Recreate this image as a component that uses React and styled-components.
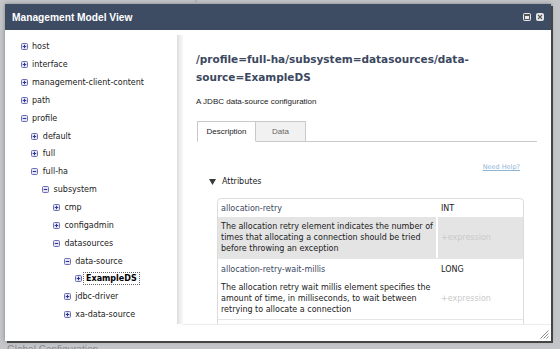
import React from 'react';
import styled, { createGlobalStyle } from 'styled-components';

const GlobalStyle = createGlobalStyle`
  html, body {
    margin: 0;
    padding: 0;
    overflow: hidden;
  }
`;

// background page behind the modal
const Page = styled.div`
  position: relative;
  width: 560px;
  height: 349px;
  overflow: hidden;
  background: #c3c5c9;
  display: flex;
  flex-direction: column;
  justify-content: space-between;
  font-family: 'DejaVu Sans', sans-serif;
`;

const BgHeading = styled.div`
  margin-top: -10px;
  padding-left: 160px;
  font: 11px 'Liberation Sans', sans-serif;
  color: #a3a5aa;
`;

const BgFooter = styled.div`
  margin-bottom: -6px;
  padding-left: 7px;
  font: 10px 'Liberation Sans', sans-serif;
  color: #8a8c90;
`;

// the modal window
const Dialog = styled.div`
  position: absolute;
  left: 5px;
  top: 4px;
  width: 546px;
  height: 337px;
  background: #fff;
  display: flex;
  flex-direction: column;
  box-shadow: 2px 2px 0 #444, 0 0 4px rgba(0, 0, 0, 0.35);
`;

const TitleBar = styled.div`
  height: 26px;
  flex: none;
  background: #3d4b63;
  display: flex;
  align-items: center;
  padding: 0 7px;
`;

const Title = styled.div`
  flex: 1;
  color: #fff;
  font: bold 10.2px 'Liberation Sans', sans-serif;
`;

const WinButtons = styled.div`
  display: flex;
  gap: 5px;
  margin-top: -1px;
`;

const WinButton = styled.div`
  width: 8px;
  height: 8px;
  border-radius: 2px;
  background: #e6e8ec;
  display: flex;
  align-items: center;
  justify-content: center;
`;

const Body = styled.div`
  flex: 1;
  display: flex;
  min-height: 0;
`;

const TreePanel = styled.div`
  width: 172px;
  flex: none;
  padding-top: 8px;
  overflow: hidden;
`;

const TreeRow = styled.div`
  height: 17.85px;
  display: flex;
  align-items: center;
  gap: 4.5px;
  padding-left: ${p => 15.5 + p.$level * 10.8}px;
  font-size: 8px;
  color: #222;
  white-space: nowrap;
`;

const TreeLabel = styled.span`
  font-weight: ${p => (p.$selected ? 'bold' : 'normal')};
  color: ${p => (p.$selected ? '#000' : '#222')};
  outline: ${p => (p.$selected ? '1px dotted #666' : 'none')};
  padding: ${p => (p.$selected ? '1px 2px' : '0')};
  margin-left: ${p => (p.$selected ? '-2px' : '0')};
`;

const Splitter = styled.div`
  width: 6px;
  flex: none;
  margin: 5px 0 1px;
  background: linear-gradient(to right, #dcdcdc, #eeeeee 50%, #f8f8f8);
`;

const ContentPanel = styled.div`
  flex: 1;
  min-width: 0;
  padding: 0 14px 0 13px;
  overflow: hidden;
  border-bottom: 1px solid #ececec;
`;

const Heading = styled.h1`
  margin: 20px 0 0;
  font: bold 10.5px/18px 'DejaVu Sans', sans-serif;
  color: #3b4860;
`;

const Description = styled.p`
  margin: 10px 0 0;
  font: 8px/11px 'Liberation Sans', sans-serif;
  color: #222;
`;

const Tabs = styled.div`
  margin: 14px 0 0 1px;
  display: flex;
  border-bottom: 1px solid #c9c9c9;
`;

const Tab = styled.div`
  width: ${p => p.$width}px;
  height: 19px;
  margin-bottom: -1px;
  display: flex;
  align-items: center;
  justify-content: center;
  border: 1px solid #c9c9c9;
  border-left-width: ${p => (p.$first ? 1 : 0)}px;
  border-bottom-color: ${p => (p.$active ? '#fff' : '#c9c9c9')};
  background: ${p => (p.$active ? '#fff' : '#f1f1f1')};
  color: ${p => (p.$active ? '#222' : '#666')};
  font: 8px 'Liberation Sans', sans-serif;
`;

const HelpRow = styled.div`
  margin-top: 20px;
  padding-right: 17px;
  display: flex;
  justify-content: flex-end;
  line-height: 10px;
`;

const HelpLink = styled.a`
  font-size: 6.5px;
  color: #90b4d6;
  text-decoration: underline;
`;

const SectionToggle = styled.div`
  margin: 4px 0 0 13px;
  display: flex;
  align-items: center;
  gap: 6px;
  font-size: 8px;
  line-height: 12px;
  color: #222;
`;

const AttrTable = styled.div`
  margin: 10px 13px 0 21px;
  border: 1px solid #dcdcdc;
  border-radius: 4px;
  font-size: 8px;
`;

const AttrGroup = styled.div`
  & + & {
    border-top: 1px solid #e6e6e6;
    padding-top: 1px;
  }
`;

const AttrRow = styled.div`
  display: grid;
  grid-template-columns: 218px 1fr;
  column-gap: 2px;
`;

const Cell = styled.div`
  display: flex;
  align-items: center;
  padding: ${p => (p.$desc ? '4px 3px' : '0 3px')};
  min-height: ${p => (p.$desc ? 0 : 18)}px;
  line-height: 11px;
  background: ${p => (p.$highlight ? '#e4e4e4' : 'transparent')};
  color: ${p => p.$color || '#222'};
`;

const Footer = styled.div`
  height: 14px;
  flex: none;
  display: flex;
  justify-content: flex-end;
  align-items: flex-end;
  padding: 0 2px 2px 0;
`;

const PlusMinus = ({ open }) => (
  <svg width="7" height="7" viewBox="0 0 7 7">
    <rect x="0.5" y="0.5" width="6" height="6" rx="1" fill="#e2e3f3" stroke="#6c70b3" />
    <line x1="1.8" y1="3.5" x2="5.2" y2="3.5" stroke="#2f3390" strokeWidth="1" />
    {!open && <line x1="3.5" y1="1.8" x2="3.5" y2="5.2" stroke="#2f3390" strokeWidth="1" />}
  </svg>
);

const tree = [
  { label: 'host', level: 0 },
  { label: 'interface', level: 0 },
  { label: 'management-client-content', level: 0 },
  { label: 'path', level: 0 },
  { label: 'profile', level: 0, open: true },
  { label: 'default', level: 1 },
  { label: 'full', level: 1 },
  { label: 'full-ha', level: 1, open: true },
  { label: 'subsystem', level: 2, open: true },
  { label: 'cmp', level: 3 },
  { label: 'configadmin', level: 3 },
  { label: 'datasources', level: 3, open: true },
  { label: 'data-source', level: 4, open: true },
  { label: 'ExampleDS', level: 5, selected: true },
  { label: 'jdbc-driver', level: 4 },
  { label: 'xa-data-source', level: 4 },
];

const attributes = [
  {
    name: 'allocation-retry',
    type: 'INT',
    highlight: true,
    desc: 'The allocation retry element indicates the number of times that allocating a connection should be tried before throwing an exception',
  },
  {
    name: 'allocation-retry-wait-millis',
    type: 'LONG',
    desc: 'The allocation retry wait millis element specifies the amount of time, in milliseconds, to wait between retrying to allocate a connection',
  },
  {
    name: 'allow-multiple-users',
    type: 'BOOLEAN',
    desc: 'If multiple users are going to access the datasource through the getConnection(user, password) method',
  },
];

const App = () => {
  return (
    <>
      <GlobalStyle />
      <Page>
        <BgHeading>Security Domains</BgHeading>
        <BgFooter>Global Configuration</BgFooter>

        <Dialog>
          <TitleBar>
            <Title>Management Model View</Title>
            <WinButtons>
              <WinButton>
                <svg width="6" height="6" viewBox="0 0 6 6">
                  <rect x="0.5" y="0.5" width="5" height="5" fill="none" stroke="#555" />
                  <line x1="0.5" y1="1.5" x2="5.5" y2="1.5" stroke="#555" />
                </svg>
              </WinButton>
              <WinButton>
                <svg width="6" height="6" viewBox="0 0 6 6">
                  <path d="M1 1L5 5M5 1L1 5" stroke="#555" strokeWidth="1.1" />
                </svg>
              </WinButton>
            </WinButtons>
          </TitleBar>

          <Body>
            <TreePanel>
              {tree.map(node => (
                <TreeRow key={node.label} $level={node.level}>
                  <PlusMinus open={node.open} />
                  <TreeLabel $selected={node.selected}>{node.label}</TreeLabel>
                </TreeRow>
              ))}
            </TreePanel>

            <Splitter />

            <ContentPanel>
              <Heading>/profile=full-ha/subsystem=datasources/data-source=ExampleDS</Heading>
              <Description>A JDBC data-source configuration</Description>

              <Tabs>
                <Tab $width={57} $first $active>Description</Tab>
                <Tab $width={49}>Data</Tab>
              </Tabs>

              <HelpRow>
                <HelpLink href="#">Need Help?</HelpLink>
              </HelpRow>

              <SectionToggle>
                <svg width="7" height="6" viewBox="0 0 7 6">
                  <polygon points="0,0 7,0 3.5,6" fill="#3a3a3a" />
                </svg>
                Attributes
              </SectionToggle>

              <AttrTable>
                {attributes.map(attr => (
                  <AttrGroup key={attr.name}>
                    <AttrRow>
                      <Cell $color="#3b4860">{attr.name}</Cell>
                      <Cell>{attr.type}</Cell>
                    </AttrRow>
                    <AttrRow>
                      <Cell $desc $highlight={attr.highlight}>{attr.desc}</Cell>
                      <Cell $desc $highlight={attr.highlight} $color="#cacaca">+expression</Cell>
                    </AttrRow>
                  </AttrGroup>
                ))}
              </AttrTable>
            </ContentPanel>
          </Body>

          <Footer>
            <svg width="10" height="10" viewBox="0 0 10 10">
              <path d="M9.5 1.5L1.5 9.5M9.5 4.5L4.5 9.5M9.5 7.5L7.5 9.5" stroke="#888" strokeWidth="1" />
            </svg>
          </Footer>
        </Dialog>
      </Page>
    </>
  );
};

export default App;
